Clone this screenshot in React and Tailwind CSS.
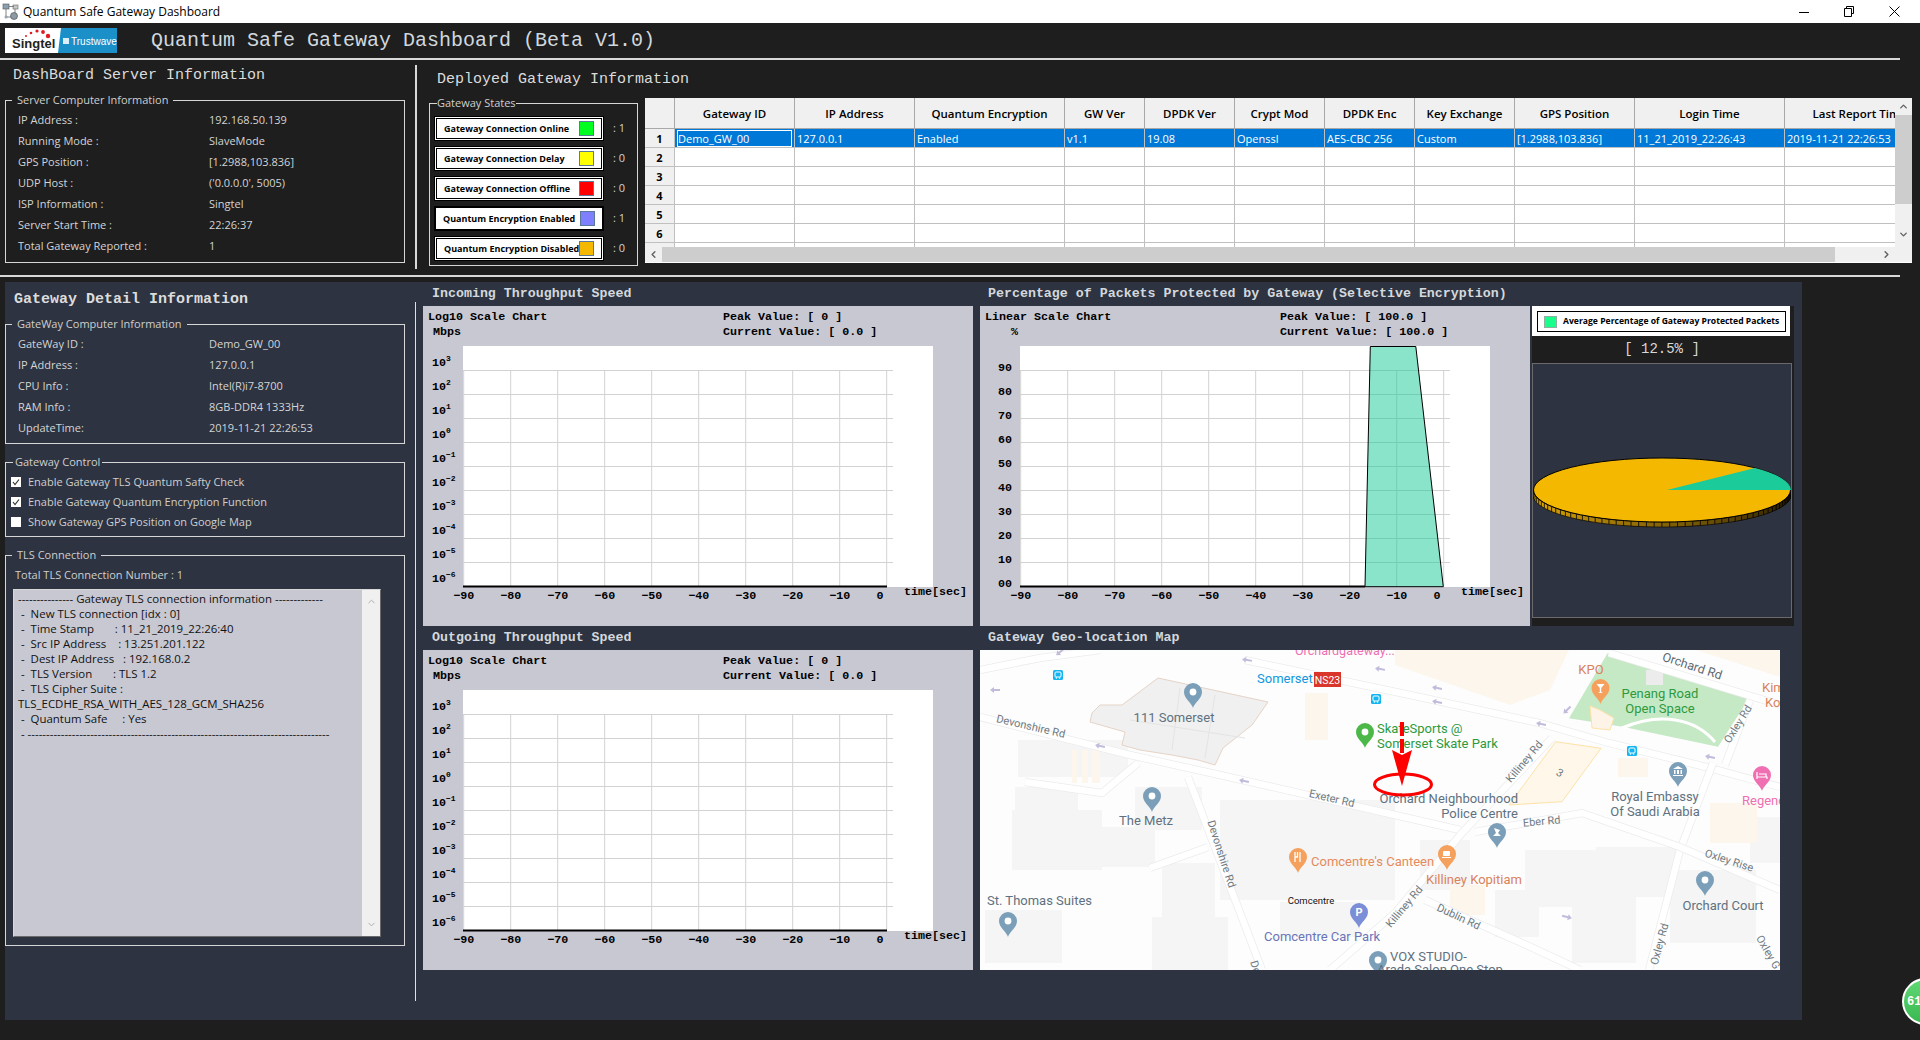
import React from 'react';
import { ChevronUp, ChevronDown, ChevronLeft, ChevronRight } from 'lucide-react';

const serverInfo = [
  ['IP Address :', '192.168.50.139'],
  ['Running Mode :', 'SlaveMode'],
  ['GPS Position :', '[1.2988,103.836]'],
  ['UDP Host :', "('0.0.0.0', 5005)"],
  ['ISP Information :', 'Singtel'],
  ['Server Start Time :', '22:26:37'],
  ['Total Gateway Reported :', '1'],
];

const gatewayInfo = [
  ['GateWay ID :', 'Demo_GW_00'],
  ['IP Address :', '127.0.0.1'],
  ['CPU Info :', 'Intel(R)i7-8700'],
  ['RAM Info :', '8GB-DDR4 1333Hz'],
  ['UpdateTime:', '2019-11-21 22:26:53'],
];

const states = [
  { label: 'Gateway Connection Online', color: 'bg-[#00ff21]', count: 1 },
  { label: 'Gateway Connection Delay', color: 'bg-[#ffff00]', count: 0 },
  { label: 'Gateway Connection Offline', color: 'bg-[#ff0000]', count: 0 },
  { label: 'Quantum Encryption Enabled', color: 'bg-[#8080ff]', count: 1, thick: true },
  { label: 'Quantum Encryption Disabled', color: 'bg-[#f5b800]', count: 0 },
];

const columns = [
  ['Gateway ID', 120],
  ['IP Address', 120],
  ['Quantum Encryption', 150],
  ['GW Ver', 80],
  ['DPDK Ver', 90],
  ['Crypt Mod', 90],
  ['DPDK Enc', 90],
  ['Key Exchange', 100],
  ['GPS Position', 120],
  ['Login Time', 150],
  ['Last Report Time', 150],
];

const firstRow = ['Demo_GW_00', '127.0.0.1', 'Enabled', 'v1.1', '19.08', 'Openssl', 'AES-CBC 256', 'Custom', '[1.2988,103.836]', '11_21_2019_22:26:43', '2019-11-21 22:26:53'];

const tlsLines = [
  '--------------- Gateway TLS connection information -------------',
  ' -  New TLS connection [idx : 0]',
  ' -  Time Stamp       : 11_21_2019_22:26:40',
  ' -  Src IP Address    : 13.251.201.122',
  ' -  Dest IP Address   : 192.168.0.2',
  ' -  TLS Version       : TLS 1.2',
  ' -  TLS Cipher Suite :',
  'TLS_ECDHE_RSA_WITH_AES_128_GCM_SHA256',
  ' -  Quantum Safe     : Yes',
  ' - ----------------------------------------------------------------------------------',
];

function InfoRows({ rows }) {
  return rows.map(([label, value]) => (
    <div key={label} className="flex h-[21px] items-center pl-[12px] text-[11px] text-[#d4d4d4]">
      <span className="w-[191px]">{label}</span>
      <span>{value}</span>
    </div>
  ));
}

function GroupBox({ title, className, titleClass = 'ml-[6px] px-[5px]', children }) {
  return (
    <fieldset className={`border border-[#d6d6d6] ${className}`}>
      <legend className={`${titleClass} h-[16px] leading-[16px] text-[11px] text-[#cfcfcf]`}>{title}</legend>
      {children}
    </fieldset>
  );
}

function Heading({ children, className }) {
  return <div className={`font-['Liberation_Mono',monospace] whitespace-pre ${className}`}>{children}</div>;
}

function StateRow({ label, color, count, thick }) {
  const inner = (
    <div className="flex h-full items-center justify-between pl-[7px] pr-[7px]">
      <span className="text-[9px] font-bold text-black whitespace-nowrap">{label}</span>
      <span className={`w-[15px] h-[15px] shrink-0 border border-[#5b7a99] ${color}`}></span>
    </div>
  );
  return (
    <div className="flex items-center h-[25px] mb-[5px]">
      {thick ? (
        <div className="w-[170px] h-[25px] ml-[4px] border-2 border-black bg-white">{inner}</div>
      ) : (
        <div className="w-[170px] h-[25px] ml-[4px] border border-black bg-white p-[1px]">
          <div className="h-full border border-black">{inner}</div>
        </div>
      )}
      <span className="ml-[9px] text-[11px] text-[#d4d4d4] whitespace-pre">: {count}</span>
    </div>
  );
}

function GatewayTable() {
  const rowNumbers = [1, 2, 3, 4, 5, 6, 7];
  return (
    <div className="w-[1267px] h-[165px] ml-[7px] mt-[2px] bg-white flex flex-col border-b border-white">
      <div className="flex h-[149px]">
        <div className="w-[1250px] overflow-hidden">
          <table className="table-fixed border-separate border-spacing-0 w-[1290px] font-['Open_Sans',sans-serif]">
            <colgroup>
              <col className="w-[30px]" />
              {columns.map(([name, width]) => (
                <col key={name} style={{ width }} />
              ))}
            </colgroup>
            <thead>
              <tr className="h-[31px]">
                <th className="bg-[#f0f0f0] border-r border-b border-[#a8a8a8]"></th>
                {columns.map(([name]) => (
                  <th key={name} className="bg-[#f0f0f0] border-r border-b border-[#a8a8a8] text-[11.5px] pt-[2px] font-semibold text-black">
                    {name}
                  </th>
                ))}
              </tr>
            </thead>
            <tbody>
              {rowNumbers.map((n) => (
                <tr key={n} className="h-[19px]">
                  <td className="bg-[#f0f0f0] border-r border-b border-[#c0c0c0] text-center text-[11px] leading-[14px] pt-[2px] font-bold text-black p-0">{n}</td>
                  {columns.map(([name], i) => {
                    if (n !== 1) {
                      return <td key={name} className="border-r border-b border-[#c0c0c0] p-0"></td>;
                    }
                    return (
                      <td key={name} className="bg-[#0078d7] border-r border-b border-[#c0c0c0] text-[11px] leading-[14px] text-white whitespace-nowrap overflow-hidden p-0 pl-[2px]">
                        {i === 0 ? <div className="mr-[2px] border border-white pt-[1px]">{firstRow[i]}</div> : <div className="pt-[2px]">{firstRow[i]}</div>}
                      </td>
                    );
                  })}
                </tr>
              ))}
            </tbody>
          </table>
        </div>
        <div className="w-[17px] bg-[#f0f0f0] flex flex-col items-center justify-between">
          <div className="h-[17px] flex items-center"><ChevronUp size={11} strokeWidth={3} className="text-[#606060]" /></div>
          <div className="absolute top-[115px] left-[1895px] w-[17px] h-[89px] bg-[#cdcdcd]"></div>
          <div className="h-[17px] flex items-center mb-[4px]"><ChevronDown size={11} strokeWidth={3} className="text-[#606060]" /></div>
        </div>
      </div>
      <div className="flex h-[15px] bg-[#f0f0f0]">
        <div className="w-[17px] flex items-center justify-center"><ChevronLeft size={11} strokeWidth={3} className="text-[#606060]" /></div>
        <div className="w-[1173px] bg-[#cdcdcd]"></div>
        <div className="w-[60px] flex items-center justify-end pr-[3px]"><ChevronRight size={11} strokeWidth={3} className="text-[#606060]" /></div>
      </div>
    </div>
  );
}

function Chart({ linear, title, peak, current, unit, unitX }) {
  const ticks = [-90, -80, -70, -60, -50, -40, -30, -20, -10, 0];
  const powers = [3, 2, 1, 0, -1, -2, -3, -4, -5, -6];
  const labelClass = "font-['Liberation_Mono',monospace] font-bold text-[11.7px] fill-black";
  return (
    <svg width="550" height="320" className="block bg-[#c8c8d2] shrink-0">
      <rect x="40" y="40" width="470" height="241" fill="#ffffff" />
      {ticks.map((t, i) => (
        <line key={t} x1={40.7 + 47 * i} x2={40.7 + 47 * i} y1="64" y2="281" stroke="#d2d2d2" strokeWidth="1" />
      ))}
      {[0, 1, 2, 3, 4, 5, 6, 7, 8].map((i) => (
        <line key={i} x1="40" x2="470" y1={64.5 + 24 * i} y2={64.5 + 24 * i} stroke="#d2d2d2" strokeWidth="1" />
      ))}
      {linear && (
        <polygon points="385,280.7 390.3,40.5 435.8,40.5 463.3,280.7" fill="#1ccb9a" fillOpacity="0.52" stroke="#000000" strokeWidth="1" />
      )}
      <line x1="40" x2={linear ? 385 : 464} y1="280.5" y2="280.5" stroke="#000000" strokeWidth="2" />
      <text x="5" y="14" className={labelClass}>{title}</text>
      <text x={unitX} y="29" className={labelClass}>{unit}</text>
      <text x="300" y="14" className={labelClass} xmlSpace="preserve">{`Peak Value: [ ${peak} ]`}</text>
      <text x="300" y="29" className={labelClass} xmlSpace="preserve">{`Current Value: [ ${current} ]`}</text>
      {linear
        ? ['90', '80', '70', '60', '50', '40', '30', '20', '10', '00'].map((v, i) => (
            <text key={v} x="18" y={65 + 24 * i} className={labelClass}>{v}</text>
          ))
        : powers.map((p, i) => (
            <text key={p} x="9" y={60 + 24 * i} className={labelClass}>
              10
              <tspan dy="-5" className="text-[8px]">{p < 0 ? `−${-p}` : p}</tspan>
            </text>
          ))}
      {ticks.map((t, i) => (
        <text key={t} x={t === 0 ? 457 : 40.7 + 47 * i} y="293" textAnchor="middle" className={labelClass}>
          {t === 0 ? '0' : `−${-t}`}
        </text>
      ))}
      <text x="481" y="289" className={labelClass}>time[sec]</text>
    </svg>
  );
}

function PiePanel() {
  const sideSegments = Array.from({ length: 52 }, (_, i) => {
    const a = Math.PI - (i / 52) * Math.PI;
    const b = Math.PI - ((i + 1) / 52) * Math.PI;
    const t = i / 51;
    const r = Math.round(245 - 225 * t);
    const g = Math.round(184 - 170 * t);
    const b2 = Math.round(10 * (1 - t));
    const x1 = 129 + 129 * Math.cos(a);
    const y1 = 126 + 32 * Math.sin(a);
    const x2 = 129 + 129 * Math.cos(b);
    const y2 = 126 + 32 * Math.sin(b);
    return { key: i, points: `${x1},${y1} ${x2},${y2} ${x2},${y2 + 5} ${x1},${y1 + 5}`, fill: `rgb(${r},${g},${b2})` };
  });
  return (
    <div className="w-[262px] h-[320px] ml-[2px] bg-[#1e1e1e] shrink-0">
      <div className="w-[258px] h-[30px] bg-white pt-[5px] pl-[5px]">
        <div className="w-[249px] h-[21px] border border-black flex items-center pl-[6px] gap-[6px]">
          <span className="w-[13px] h-[12px] shrink-0 bg-[#1aff8c] border border-[#8fb0a0]"></span>
          <span className="text-[8.6px] font-bold text-black whitespace-nowrap">Average Percentage of Gateway Protected Packets</span>
        </div>
      </div>
      <Heading className="h-[27px] flex items-center justify-center text-[14px] text-[#d8d8d8] pr-[2px]">[ 12.5% ]</Heading>
      <div className="w-[260px] h-[255px] border border-[#6a6a6a] bg-[#2d3341]">
        <svg width="258" height="253" className="block">
          <ellipse cx="129" cy="131" rx="129" ry="32" fill="#000000" />
          {sideSegments.map((s) => (
            <polygon key={s.key} points={s.points} fill={s.fill} stroke="#000000" strokeWidth="0.6" />
          ))}
          <ellipse cx="129" cy="126" rx="128.5" ry="32" fill="#f5b800" stroke="#000000" strokeWidth="1" />
          <path d="M134 126 L222 104 A129 32 0 0 1 258 126 Z" fill="#1ccb9a" />
        </svg>
      </div>
    </div>
  );
}

function Pin({ x, y, color, children }) {
  return (
    <g transform={`translate(${x} ${y})`}>
      <path d="M0 15 C-1 10 -9 6 -9 -1 A9 9 0 1 1 9 -1 C9 6 1 10 0 15 Z" fill={color} />
      {children || <circle cx="0" cy="-1" r="3.4" fill="#ffffff" />}
    </g>
  );
}

function BusIcon({ x, y }) {
  return (
    <g transform={`translate(${x} ${y})`}>
      <rect x="-5" y="-5" width="10" height="10" rx="1.5" fill="#12b5f0" />
      <rect x="-3" y="-3" width="6" height="5" rx="1" fill="none" stroke="#ffffff" strokeWidth="1" />
      <circle cx="-1.6" cy="3" r="0.8" fill="#ffffff" />
      <circle cx="1.6" cy="3" r="0.8" fill="#ffffff" />
    </g>
  );
}

function MapArrow({ x, y, angle }) {
  return <path d="M-5 0 L-1 -3 L-1 -1 L5 -1 L5 1 L-1 1 L-1 3 Z" transform={`translate(${x} ${y}) rotate(${angle})`} fill="#c2bbdc" />;
}

function GeoMap() {
  const buildings = [
    [38, 90, 110, 37], [35, 137, 63, 23], [32, 160, 90, 60], [118, 177, 57, 40], [155, 137, 67, 43],
    [182, 213, 53, 54], [240, 150, 175, 100], [172, 267, 76, 53], [5, 260, 77, 53], [545, 200, 71, 57],
    [616, 197, 80, 50], [592, 247, 64, 66], [515, 240, 44, 47], [690, 220, 86, 73], [770, 167, 30, 46],
    [440, 190, 50, 50], [300, 252, 80, 35],
  ];
  const beige = [[325, 43, 23, 47], [92, 100, 5, 33], [102, 100, 6, 33], [112, 100, 8, 33], [638, 108, 30, 19], [730, 153, 47, 40], [470, 235, 35, 30]];
  const roads = [
    'M0 67 L150 105 L240 125 L415 165 L480 180',
    'M265 10 L430 45 L559 73 L629 93 L726 117 L800 137',
    'M629 3 L800 55',
    'M572 88 L482 183 L415 263 L350 320',
    'M733 113 L700 200 L669 320',
    'M208 127 L282 320',
    'M45 132 L122 143 L158 113',
    'M170 218 L228 197',
    'M445 250 L542 293 L600 320',
    'M495 182 L602 163 L700 197 L800 240',
    'M0 20 L60 8 L120 0',
    'M770 50 L745 115',
  ];
  const small = "font-['Roboto',sans-serif] text-[11px] fill-[#6f7a82]";
  const label = "font-['Roboto',sans-serif] text-[13px] fill-[#5f7180]";
  return (
    <svg width="800" height="320" className="block bg-[#fdfdfd] shrink-0">
      <path d="M415 0 L589 0 L570 40 L530 55 L415 15 Z" fill="#fdf6ec" />
      <path d="M716 0 L800 0 L800 27 Z" fill="#fdf6ec" />
      <path d="M627.6 3.3 L770 46.7 L738 96.7 L642.6 76.7 L589 68.3 Z" fill="#c5e8c5" />
      <path d="M642 78 C680 62 715 68 735 92" fill="none" stroke="#ffffff" strokeWidth="3" />
      <rect x="666" y="20" width="17" height="15" fill="#ececec" />
      {buildings.map(([x, y, w, h]) => (
        <rect key={`${x}-${y}`} x={x} y={y} width={w} height={h} fill="#f5f5f5" />
      ))}
      {beige.map(([x, y, w, h]) => (
        <rect key={`${x}-${y}`} x={x} y={y} width={w} height={h} fill="#fdf6ec" />
      ))}
      {roads.map((d) => (
        <g key={d}>
          <path d={d} fill="none" stroke="#ececec" strokeWidth="8" />
          <path d={d} fill="none" stroke="#ffffff" strokeWidth="6.5" />
        </g>
      ))}
      <path d="M112 63 L120 55 L142 55 L178 28 L288 52 L272 75 L243 98 L235 115 L218 110 L192 105 L160 100 L142 95 L145 82 L110 72 Z" fill="#f0f0f0" stroke="#e6d3c6" strokeWidth="1" />
      <path d="M200 38 L192 100 M235 45 L225 108 M150 70 L265 88" fill="none" stroke="#e4e4e4" strokeWidth="1" />
      <path d="M575.7 91.7 L621 98.3 L582 151.7 L529 155 Z" fill="#fef7ea" stroke="#fde2a8" strokeWidth="1" />
      <path d="M610 56 L620 60 L634 68 L630 80 L612 78 Z" fill="#fdf3e7" stroke="#fde2a8" strokeWidth="1" />
      <MapArrow x="15" y="40" angle="0" />
      <MapArrow x="80" y="2" angle="-40" />
      <MapArrow x="267" y="10" angle="10" />
      <MapArrow x="400" y="19" angle="10" />
      <MapArrow x="120" y="96" angle="12" />
      <MapArrow x="264" y="131" angle="12" />
      <MapArrow x="457" y="38" angle="12" />
      <MapArrow x="457" y="52" angle="12" />
      <MapArrow x="561" y="74" angle="12" />
      <MapArrow x="730" y="107" angle="12" />
      <MapArrow x="587" y="60" angle="-45" />
      <MapArrow x="587" y="267" angle="195" />
      <BusIcon x="78" y="25" />
      <BusIcon x="396" y="49" />
      <BusIcon x="652" y="101" />
      <Pin x="213" y="43" color="#7b9fb8" />
      <Pin x="172" y="147" color="#7b9fb8" />
      <Pin x="28" y="272" color="#7b9fb8" />
      <Pin x="725" y="231" color="#7b9fb8" />
      <Pin x="398" y="311" color="#7b9fb8" />
      <Pin x="385" y="83" color="#4cb848" />
      <Pin x="318" y="208" color="#f5a05c">
        <path d="M-3 -6 L-3 4 M-0.5 -6 L-0.5 -1 L-3 -1 M2 -6 L2 4" stroke="#ffffff" strokeWidth="1.3" fill="none" />
      </Pin>
      <Pin x="467" y="205" color="#f5a05c">
        <rect x="-4" y="-4" width="7" height="5" rx="1" fill="#ffffff" />
        <rect x="-5" y="2" width="9" height="1" fill="#ffffff" />
      </Pin>
      <Pin x="620.5" y="39" color="#f5a05c">
        <path d="M-4 -5 L4 -5 L0.7 -1 L0.7 3 L2.5 4 L-2.5 4 L-0.7 3 L-0.7 -1 Z" fill="#ffffff" />
      </Pin>
      <Pin x="698" y="122" color="#7b9fb8">
        <path d="M-5 -3 L0 -6 L5 -3 Z M-4 -2 H-2.5 V2 H-4 Z M-1 -2 H1 V2 H-1 Z M2.5 -2 H4 V2 H2.5 Z M-5 3 H5 V4 H-5 Z" fill="#ffffff" />
      </Pin>
      <Pin x="517" y="183" color="#7b9fb8">
        <path d="M-3 -5 L3 -3 L1 0 L4 3 L-4 3 L-1 0 Z" fill="#ffffff" />
      </Pin>
      <Pin x="782" y="126" color="#ef6fb2">
        <path d="M-5 -4 V3 M-5 1 H5 V3 M-3 -2 H4 V1" stroke="#ffffff" strokeWidth="1.2" fill="none" />
      </Pin>
      <Pin x="379" y="263" color="#7b8fd8">
        <text x="0" y="3" textAnchor="middle" className="font-['Roboto',sans-serif] font-bold text-[11px] fill-white">P</text>
      </Pin>

      <text x="315" y="5" className="font-['Roboto',sans-serif] text-[12.5px] fill-[#ef6fb2]">Orchardgateway...</text>
      <text x="277" y="33" className="font-['Roboto',sans-serif] text-[13px] fill-[#0f97e0]">Somerset</text>
      <rect x="334" y="22" width="27" height="15" fill="#d9352a" />
      <text x="347.5" y="33.5" textAnchor="middle" className="font-['Roboto',sans-serif] text-[10.5px] fill-white">NS23</text>
      <text x="194" y="72" textAnchor="middle" className={label}>111 Somerset</text>
      <text x="166" y="175" textAnchor="middle" className={label}>The Metz</text>
      <text x="7" y="255" className={label}>St. Thomas Suites</text>
      <text x="538" y="153" textAnchor="end" className={label}>Orchard Neighbourhood</text>
      <text x="538" y="168" textAnchor="end" className={label}>Police Centre</text>
      <text x="675" y="151" textAnchor="middle" className={label}>Royal Embassy</text>
      <text x="675" y="166" textAnchor="middle" className={label}>Of Saudi Arabia</text>
      <text x="743" y="260" textAnchor="middle" className={label}>Orchard Court</text>
      <text x="410" y="311" className={label}>VOX STUDIO-</text>
      <text x="397" y="324" className={label}>Arada Salon One Stop</text>
      <text x="397" y="83" className="font-['Roboto',sans-serif] text-[13px] fill-[#2e9a3d]">SkateSports @</text>
      <text x="397" y="98" className="font-['Roboto',sans-serif] text-[13px] fill-[#2e9a3d]">Somerset Skate Park</text>
      <text x="680" y="48" textAnchor="middle" className="font-['Roboto',sans-serif] text-[13px] fill-[#2e9a3d]">Penang Road</text>
      <text x="680" y="63" textAnchor="middle" className="font-['Roboto',sans-serif] text-[13px] fill-[#2e9a3d]">Open Space</text>
      <text x="611" y="24" textAnchor="middle" className="font-['Roboto',sans-serif] text-[13px] fill-[#d9825b]">KPO</text>
      <text x="782" y="42" className="font-['Roboto',sans-serif] text-[13px] fill-[#d9825b]">Kim</text>
      <text x="785" y="57" className="font-['Roboto',sans-serif] text-[13px] fill-[#d9825b]">Ko</text>
      <text x="331" y="216" className="font-['Roboto',sans-serif] text-[13px] fill-[#e58a5c]">Comcentre's Canteen</text>
      <text x="446" y="234" className="font-['Roboto',sans-serif] text-[13px] fill-[#d9825b]">Killiney Kopitiam</text>
      <text x="284" y="291" className="font-['Roboto',sans-serif] text-[13px] fill-[#6a74b8]">Comcentre Car Park</text>
      <text x="331" y="254" textAnchor="middle" className="font-['Roboto',sans-serif] text-[9.5px] fill-[#111111]">Comcentre</text>
      <text x="762" y="155" className="font-['Roboto',sans-serif] text-[13px] fill-[#ef6fb2]">Regency</text>

      <text transform="translate(50 80) rotate(13)" textAnchor="middle" className={small}>Devonshire Rd</text>
      <text transform="translate(351 152) rotate(13)" textAnchor="middle" className={small}>Exeter Rd</text>
      <text transform="translate(238 205) rotate(72)" textAnchor="middle" className={small}>Devonshire Rd</text>
      <text transform="translate(270 312) rotate(72)" className={small}>Dev</text>
      <text transform="translate(711 20) rotate(18)" textAnchor="middle" className="font-['Roboto',sans-serif] text-[12.5px] fill-[#5f6a72]">Orchard Rd</text>
      <text transform="translate(761 76) rotate(-58)" textAnchor="middle" className={small}>Oxley Rd</text>
      <text transform="translate(547 114) rotate(-50)" textAnchor="middle" className={small}>Killiney Rd</text>
      <text transform="translate(427 259) rotate(-50)" textAnchor="middle" className={small}>Killiney Rd</text>
      <text transform="translate(562 175) rotate(-5)" textAnchor="middle" className={small}>Eber Rd</text>
      <text transform="translate(748 214) rotate(18)" textAnchor="middle" className={small}>Oxley Rise</text>
      <text transform="translate(477 270) rotate(25)" textAnchor="middle" className={small}>Dublin Rd</text>
      <text transform="translate(683 295) rotate(-75)" textAnchor="middle" className={small}>Oxley Rd</text>
      <text transform="translate(785 304) rotate(60)" textAnchor="middle" className={small}>Oxley G</text>
      <text transform="translate(578 126) rotate(30)" textAnchor="middle" className={small}>3</text>

      <line x1="422" y1="72" x2="422" y2="103" stroke="#ff0000" strokeWidth="4" strokeDasharray="14 3" />
      <path d="M412 100 L422 105 L432 100 L422 136 Z" fill="#ff0000" />
      <ellipse cx="423" cy="134.5" rx="28.5" ry="10.5" fill="none" stroke="#ff0000" strokeWidth="3" />
    </svg>
  );
}

function Checkbox({ checked, label }) {
  return (
    <div className="flex items-center h-[20px] pl-[5px] text-[11px] text-[#cfcfcf]">
      <span className="w-[10px] h-[10px] bg-white flex items-center justify-center mr-[7px]">
        {checked && (
          <svg width="8" height="8" viewBox="0 0 8 8">
            <path d="M1 4 L3 6.5 L7 1.5" fill="none" stroke="#333333" strokeWidth="1.2" />
          </svg>
        )}
      </span>
      {label}
    </div>
  );
}

export default function App() {
  return (
    <div className="relative w-[1920px] h-[1040px] overflow-hidden bg-[#1e1e1e] font-['Open_Sans',sans-serif]">
      {/* window title bar */}
      <div className="h-[23px] bg-white flex items-center">
        <svg width="18" height="18" viewBox="0 0 18 18" className="ml-[2px]">
          <rect x="1" y="1" width="6" height="5" fill="#8aa0b0" stroke="#555555" strokeWidth="0.6" />
          <rect x="11" y="2" width="5" height="4" fill="#c8c8c8" stroke="#666666" strokeWidth="0.6" />
          <circle cx="12" cy="13" r="3.5" fill="#8d9aa6" stroke="#444444" strokeWidth="0.6" />
          <circle cx="4" cy="14" r="1.5" fill="#9aa5b0" />
          <path d="M4 6 V13 M7 3.5 H12 M13 6 V10 M5 14 H9" stroke="#666666" strokeWidth="0.8" fill="none" />
        </svg>
        <span className="ml-[3px] text-[12px] text-black">Quantum Safe Gateway Dashboard</span>
        <div className="ml-auto flex items-center mr-[20px] gap-[35px]">
          <svg width="10" height="10" viewBox="0 0 10 10"><path d="M0 5.5 H10" stroke="#000000" strokeWidth="1" /></svg>
          <svg width="10" height="11" viewBox="0 0 10 11"><path d="M2.5 2.5 V0.5 H9.5 V7.5 H7.5 M0.5 2.5 H7.5 V10.5 H0.5 Z" stroke="#000000" strokeWidth="1" fill="none" /></svg>
          <svg width="11" height="11" viewBox="0 0 11 11"><path d="M0.5 0.5 L10.5 10.5 M10.5 0.5 L0.5 10.5" stroke="#000000" strokeWidth="1" /></svg>
        </div>
      </div>

      {/* logo + title */}
      <div className="h-[35px] flex items-start pt-[5px]">
        <svg width="112" height="25" className="ml-[5px] block shrink-0">
          <rect width="112" height="25" fill="#ffffff" />
          <path d="M56 0 H112 V25 H53 Z" fill="#1a8fc8" />
          <text x="7" y="20" className="font-['Liberation_Sans',sans-serif] font-bold text-[13px] fill-[#222222]">Singtel</text>
          <circle cx="21" cy="8" r="1" fill="#e01b22" />
          <circle cx="26" cy="5" r="1.3" fill="#e01b22" />
          <circle cx="32" cy="3" r="1.6" fill="#e01b22" />
          <circle cx="38" cy="4" r="1.9" fill="#e01b22" />
          <circle cx="43" cy="8" r="2.2" fill="#e01b22" />
          <rect x="58" y="10" width="6" height="6" fill="#ffffff" fillOpacity="0.85" />
          <text x="66" y="16.5" className="font-['Liberation_Sans',sans-serif] text-[10px] fill-white">Trustwave</text>
        </svg>
        <Heading className="ml-[34px] h-[25px] flex items-center text-[20px] text-[#d0d8de]">Quantum Safe Gateway Dashboard (Beta V1.0)</Heading>
      </div>
      <div className="h-[2px] w-[1900px] bg-[#d8d8d8]"></div>

      {/* server info + deployed gateways */}
      <div className="h-[215px] flex">
        <div className="w-[415px] shrink-0">
          <Heading className="h-[30px] pl-[13px] pt-[2px] flex items-center text-[15px] text-[#dcdcdc]">DashBoard Server Information</Heading>
          <GroupBox title="Server Computer Information" className="ml-[5px] mt-[2px] w-[400px] h-[171px] pt-[2px]">
            <InfoRows rows={serverInfo} />
          </GroupBox>
        </div>
        <div className="w-[2px] h-[204px] mt-[5px] bg-[#d8d8d8] shrink-0"></div>
        <div className="flex-1">
          <Heading className="h-[36px] pl-[20px] pt-[5px] flex items-center text-[15px] text-[#dcdcdc]">Deployed Gateway Information</Heading>
          <div className="flex">
            <fieldset className="ml-[12px] w-[209px] h-[170px] border border-[#d6d6d6]">
              <legend className="ml-[7px] h-[14px] leading-[14px] text-[11px] text-[#cfcfcf]">Gateway States</legend>
              <div className="pt-[6px]">
                {states.map((s) => (
                  <StateRow key={s.label} {...s} />
                ))}
              </div>
            </fieldset>
            <GatewayTable />
          </div>
        </div>
      </div>
      <div className="h-[2px] w-[1900px] bg-[#d8d8d8]"></div>

      {/* gateway detail panel */}
      <div className="ml-[5px] mt-[5px] w-[1797px] h-[738px] bg-[#2d3341] flex">
        <div className="w-[410px] shrink-0">
          <Heading className="h-[34px] pl-[9px] pt-[2px] flex items-center text-[15px] font-bold text-[#dcdcdc]">Gateway Detail Information</Heading>
          <GroupBox title="GateWay Computer Information" className="w-[400px] h-[128px] pt-[2px]">
            <InfoRows rows={gatewayInfo} />
          </GroupBox>
          <GroupBox title="Gateway Control" titleClass="ml-[7px] px-[2px]" className="w-[400px] h-[83px] mt-[10px] pt-[2px]">
            <Checkbox checked label="Enable Gateway TLS Quantum Safty Check" />
            <Checkbox checked label="Enable Gateway Quantum Encryption Function" />
            <Checkbox label="Show Gateway GPS Position on Google Map" />
          </GroupBox>
          <GroupBox title="TLS Connection" className="w-[400px] h-[399px] mt-[10px] pt-[2px]">
            <div className="h-[21px] flex items-center pl-[9px] text-[11px] text-[#cfcfcf]">Total TLS Connection Number : 1</div>
            <div className="ml-[7px] mt-[3px] w-[368px] h-[348px] flex border border-[#6a6a6a] border-l-[#d8d8d8] border-t-[#d8d8d8]">
              <div className="flex-1 overflow-hidden bg-[#c8c8d2] pl-[4px] pt-[1px] text-[11.45px] leading-[15px] text-[#111111] whitespace-pre">
                {tlsLines.map((line) => (
                  <div key={line}>{line}</div>
                ))}
              </div>
              <div className="w-[18px] bg-[#f0f0f0] flex flex-col items-center justify-between">
                <ChevronUp size={11} strokeWidth={2} className="text-[#a8a8a8] mt-[6px]" />
                <ChevronDown size={11} strokeWidth={2} className="text-[#a8a8a8] mb-[6px]" />
              </div>
            </div>
          </GroupBox>
        </div>
        <div className="w-px h-[699px] mt-[20px] bg-[#e0e0e0] shrink-0"></div>
        <div className="ml-[7px] grid grid-cols-[557px_1fr] grid-rows-[344px_344px] content-start">
          <div>
            <Heading className="h-[24px] pl-[9px] flex items-center text-[13.3px] font-bold text-[#d4d8dc]">Incoming Throughput Speed</Heading>
            <Chart title="Log10 Scale Chart" unit="Mbps" unitX="10" peak="0" current="0.0" />
          </div>
          <div>
            <Heading className="h-[24px] pl-[8px] flex items-center text-[13.3px] font-bold text-[#d4d8dc]">Percentage of Packets Protected by Gateway (Selective Encryption)</Heading>
            <div className="flex">
              <Chart linear title="Linear Scale Chart" unit="%" unitX="31" peak="100.0" current="100.0" />
              <PiePanel />
            </div>
          </div>
          <div>
            <Heading className="h-[24px] pl-[9px] flex items-center text-[13.3px] font-bold text-[#d4d8dc]">Outgoing Throughput Speed</Heading>
            <Chart title="Log10 Scale Chart" unit="Mbps" unitX="10" peak="0" current="0.0" />
          </div>
          <div>
            <Heading className="h-[24px] pl-[8px] flex items-center text-[13.3px] font-bold text-[#d4d8dc]">Gateway Geo-location Map</Heading>
            <GeoMap />
          </div>
        </div>
      </div>

      {/* floating badge */}
      <div className="absolute left-[1902px] top-[978px] w-[47px] h-[47px] rounded-full border-2 border-white bg-gradient-to-b from-[#5fd873] to-[#38b850] flex items-center pl-[3px]">
        <span className="font-['Liberation_Mono',monospace] font-bold text-[12px] text-white">61</span>
      </div>
    </div>
  );
}
